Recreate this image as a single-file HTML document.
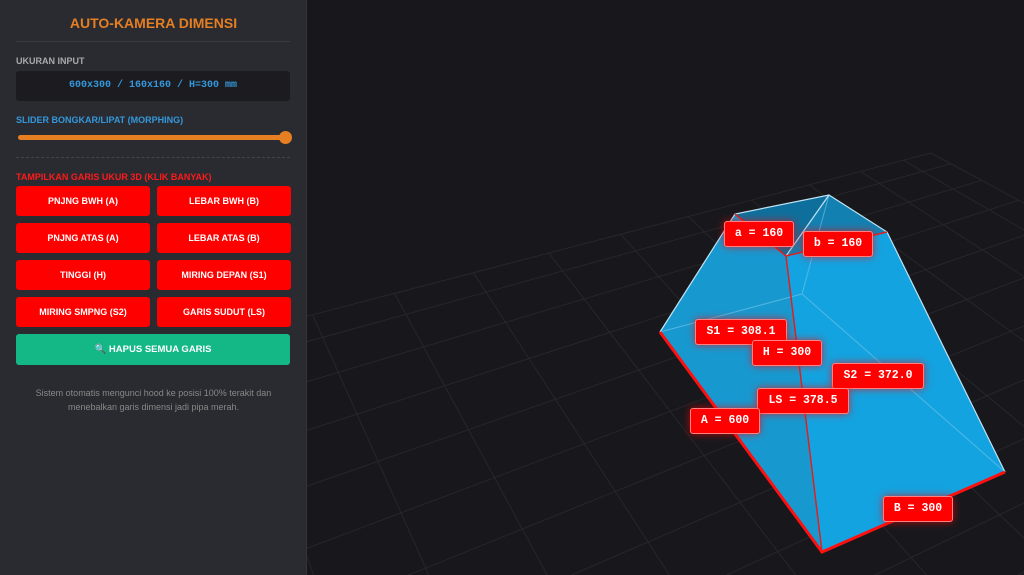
<!DOCTYPE html>
<html><head><meta charset="utf-8"><style>
*{margin:0;padding:0;box-sizing:border-box}
html,body{width:1024px;height:575px;overflow:hidden}
body{background:#18181c;font-family:"Liberation Sans",sans-serif;position:relative}
#side{position:absolute;left:0;top:0;width:307px;height:575px;background:#2a2b31;border-right:1px solid #34353b}
.t{position:absolute;left:0;width:307px;text-align:center;color:#e67e22;font-weight:bold;font-size:14px;top:15px}
.hr{position:absolute;left:16px;width:274px;border-top:1px solid #3a3b42}
.lbl{position:absolute;left:16px;font-weight:bold;font-size:9px}
.inp{position:absolute;left:16px;top:71px;width:274px;height:30px;background:#1c1c20;border-radius:3px;color:#3498db;font-family:"Liberation Mono",monospace;font-weight:bold;font-size:10px;text-align:center;line-height:30px}
.btn{position:absolute;width:134px;height:30px;background:#ff0000;border-radius:3px;color:#fff;font-weight:bold;font-size:9px;text-align:center;line-height:30px}
.g{position:absolute;left:16px;top:334px;width:274px;height:31px;background:#13b886;border-radius:3px;color:#fff;font-weight:bold;font-size:9.5px;text-align:center;line-height:31px}
.note{position:absolute;left:0;width:307px;top:386px;text-align:center;color:#888;font-size:9px;line-height:14px}
.tag{position:absolute;height:26px;background:#ff0000;border:1px solid #ff8080;border-radius:3px;color:#fff;font-family:"Liberation Mono",monospace;font-weight:bold;font-size:11.5px;line-height:24px;text-align:center;box-shadow:0 0 8px rgba(255,0,0,.7)}
</style></head><body>
<svg style="position:absolute;left:0;top:0" width="1024" height="575">
<g id="grid" stroke="#26262b" stroke-width="1" fill="none"></g>
<polygon points="735,214 829,195 887,232 786,256" fill="#0e6f9c"/>
<polygon points="829,195 887,232 802,294 786,256" fill="#1585b8" opacity=".8"/>
<polygon points="660,332 735,214 786,256 822,552" fill="#1799d0"/>
<polygon points="786,256 887,232 1005,472 822,552" fill="#13a3e0"/>
<path d="M802 294 L1005 472 M802 294 L660 332 M802 294 L829 195" stroke="#7cc8ea" stroke-width="1" opacity=".6" fill="none"/>
<path d="M660 332 L735 214 L829 195 L887 232 L1005 472 M829 195 L786 256" stroke="#bfe4f5" stroke-width="1.2" fill="none"/>
<path d="M735 214 L786 256 L887 232 M786 256 L822 552" stroke="#e02020" stroke-width="1.5" fill="none"/>
<path d="M660 332 L822 552 L1005 472" stroke="#ff1010" stroke-width="3" fill="none"/>
</svg>
<script>
(function(){
var A=[931,153],B=[140,360],C=[1500,460],D=[350,1100];
function P(u,v){var x=(1-u)*(1-v)*A[0]+u*(1-v)*B[0]+(1-u)*v*C[0]+u*v*D[0];var y=(1-u)*(1-v)*A[1]+u*(1-v)*B[1]+(1-u)*v*C[1]+u*v*D[1];return x.toFixed(1)+' '+y.toFixed(1);}
var d='',n=12;
for(var i=0;i<=n;i++){var t=Math.pow(i/n,1.35);d+='M'+P(t,0)+' L'+P(t,1)+' M'+P(0,t)+' L'+P(1,t)+' ';}
var p=document.createElementNS('http://www.w3.org/2000/svg','path');p.setAttribute('d',d);document.getElementById('grid').appendChild(p);
})();
</script>
<div id="side">
<div class="t">AUTO-KAMERA DIMENSI</div>
<div class="hr" style="top:41px"></div>
<div class="lbl" style="top:56px;color:#aaa">UKURAN INPUT</div>
<div class="inp">600x300 / 160x160 / H=300 mm</div>
<div class="lbl" style="top:115px;color:#3498db">SLIDER BONGKAR/LIPAT (MORPHING)</div>
<div style="position:absolute;left:18px;top:135px;width:270px;height:5px;border-radius:3px;background:#e67e22"></div>
<div style="position:absolute;left:279px;top:131px;width:13px;height:13px;border-radius:50%;background:#e67e22"></div>
<div class="hr" style="top:157px;border-top:1px dashed #44454c"></div>
<div class="lbl" style="top:172px;color:#ff1a1a">TAMPILKAN GARIS UKUR 3D (KLIK BANYAK)</div>
<div class="btn" style="left:16px;top:186px">PNJNG BWH (A)</div>
<div class="btn" style="left:157px;top:186px">LEBAR BWH (B)</div>
<div class="btn" style="left:16px;top:223px">PNJNG ATAS (A)</div>
<div class="btn" style="left:157px;top:223px">LEBAR ATAS (B)</div>
<div class="btn" style="left:16px;top:260px">TINGGI (H)</div>
<div class="btn" style="left:157px;top:260px">MIRING DEPAN (S1)</div>
<div class="btn" style="left:16px;top:297px">MIRING SMPNG (S2)</div>
<div class="btn" style="left:157px;top:297px">GARIS SUDUT (LS)</div>
<div class="g">🔍 HAPUS SEMUA GARIS</div>
<div class="note">Sistem otomatis mengunci hood ke posisi 100% terakit dan<br>menebalkan garis dimensi jadi pipa merah.</div>
</div>
<div class="tag" style="left:724px;top:221px;width:70px">a = 160</div>
<div class="tag" style="left:803px;top:231px;width:70px">b = 160</div>
<div class="tag" style="left:695px;top:319px;width:92px">S1 = 308.1</div>
<div class="tag" style="left:752px;top:340px;width:70px">H = 300</div>
<div class="tag" style="left:832px;top:363px;width:92px">S2 = 372.0</div>
<div class="tag" style="left:757px;top:388px;width:92px">LS = 378.5</div>
<div class="tag" style="left:690px;top:408px;width:70px">A = 600</div>
<div class="tag" style="left:883px;top:496px;width:70px">B = 300</div>
</body></html>
